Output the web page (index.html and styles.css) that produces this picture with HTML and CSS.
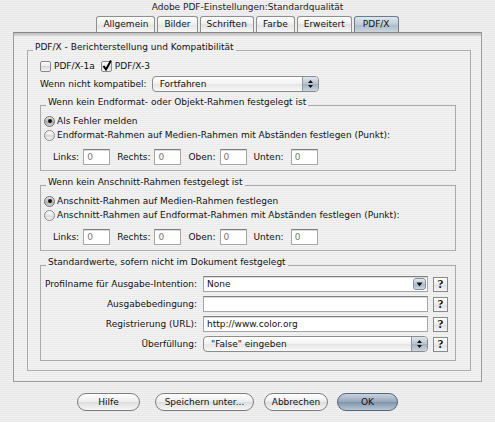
FILE: index.html
```html
<!DOCTYPE html>
<html lang="de">
<head>
  <meta charset="UTF-8">
  <title>Adobe PDF-Einstellungen</title>
  <link rel="stylesheet" href="styles.css">
</head>
<body>
  <div class="title">Adobe PDF-Einstellungen:Standardqualität</div>

  <div class="tabs">
    <span class="tab">Allgemein</span>
    <span class="tab">Bilder</span>
    <span class="tab">Schriften</span>
    <span class="tab">Farbe</span>
    <span class="tab">Erweitert</span>
    <span class="tab active">PDF/X</span>
  </div>

  <div class="panel">
    <fieldset class="group outer">
      <legend>PDF/X - Berichterstellung und Kompatibilität</legend>
      <div class="outer-body">
        <div class="checks">
          <span class="check"><span class="box"></span>PDF/X-1a</span>
          <span class="check"><span class="box"><svg width="12" height="13" viewBox="0 0 12 13"><path d="M2.5 7 L5 10.5 L10 1.5" fill="none" stroke="#000" stroke-width="2"/></svg></span>PDF/X-3</span>
        </div>

        <div class="compat">
          <span>Wenn nicht kompatibel:</span>
          <span class="popup compat-popup">
            <span class="popup-text">Fortfahren</span>
            <span class="cap"><svg width="7" height="10" viewBox="0 0 7 10"><path d="M1 4 L3.5 1 L6 4 Z M1 6 L3.5 9 L6 6 Z" fill="#111"/></svg></span>
          </span>
        </div>

        <fieldset class="group sub">
          <legend>Wenn kein Endformat- oder Objekt-Rahmen festgelegt ist</legend>
          <div class="sub-body">
            <div class="radio"><span class="dot on"></span>Als Fehler melden</div>
            <div class="radio"><span class="dot"></span>Endformat-Rahmen auf Medien-Rahmen mit Abständen festlegen (Punkt):</div>
            <div class="margins">
              <span class="m-label">Links:</span><span class="field small">0</span>
              <span class="m-label">Rechts:</span><span class="field small">0</span>
              <span class="m-label">Oben:</span><span class="field small">0</span>
              <span class="m-label wide">Unten:</span><span class="field small">0</span>
            </div>
          </div>
        </fieldset>

        <fieldset class="group sub">
          <legend>Wenn kein Anschnitt-Rahmen festgelegt ist</legend>
          <div class="sub-body">
            <div class="radio"><span class="dot on"></span>Anschnitt-Rahmen auf Medien-Rahmen festlegen</div>
            <div class="radio"><span class="dot"></span>Anschnitt-Rahmen auf Endformat-Rahmen mit Abständen festlegen (Punkt):</div>
            <div class="margins">
              <span class="m-label">Links:</span><span class="field small">0</span>
              <span class="m-label">Rechts:</span><span class="field small">0</span>
              <span class="m-label">Oben:</span><span class="field small">0</span>
              <span class="m-label wide">Unten:</span><span class="field small">0</span>
            </div>
          </div>
        </fieldset>

        <fieldset class="group sub">
          <legend>Standardwerte, sofern nicht im Dokument festgelegt</legend>
          <div class="form">
            <span class="f-label">Profilname für Ausgabe-Intention:</span>
            <span class="field combo">None<span class="combo-btn"><svg width="7" height="5" viewBox="0 0 7 5"><path d="M0.5 0.5 L6.5 0.5 L3.5 4.5 Z" fill="#111"/></svg></span></span>
            <span class="help">?</span>

            <span class="f-label">Ausgabebedingung:</span>
            <span class="field"></span>
            <span class="help">?</span>

            <span class="f-label">Registrierung (URL):</span>
            <span class="field">http://www.color.org</span>
            <span class="help">?</span>

            <span class="f-label">Überfüllung:</span>
            <span class="popup">
              <span class="popup-text">"False" eingeben</span>
              <span class="cap"><svg width="7" height="10" viewBox="0 0 7 10"><path d="M1 4 L3.5 1 L6 4 Z M1 6 L3.5 9 L6 6 Z" fill="#111"/></svg></span>
            </span>
            <span class="help">?</span>
          </div>
        </fieldset>
      </div>
    </fieldset>
  </div>

  <div class="buttons">
    <span class="btn hilfe">Hilfe</span>
    <span class="btn speichern">Speichern unter...</span>
    <span class="btn abbrechen">Abbrechen</span>
    <span class="btn ok">OK</span>
  </div>
</body>
</html>
```

FILE: styles.css
```css
html, body {
  margin: 0;
  padding: 0;
  height: 100%;
  overflow: hidden;
}

body {
  background: repeating-linear-gradient(#f1f1f1 0 1px, #e7e7e7 1px 2px);
  font-family: "DejaVu Sans", sans-serif;
  font-size: 9px;
  color: #111;
}

.title {
  height: 16px;
  line-height: 14px;
  text-align: center;
  color: #222;
}

/* tabs */
.tabs {
  display: flex;
  justify-content: center;
  gap: 2px;
  height: 16px;
}

.tab {
  height: 16px;
  box-sizing: border-box;
  padding: 0 6px;
  line-height: 15px;
  border: 1px solid #8f8f8f;
  border-bottom: none;
  border-radius: 3px 3px 0 0;
  background: linear-gradient(#fdfdfd, #eeeeee 50%, #e2e2e2 50%, #f6f6f6);
}

.tab.active {
  padding: 0 8px;
  background: linear-gradient(#e0e7ee, #bfcbd7 50%, #a9b8c7 50%, #cbd5df);
  border-color: #6d7c8b;
}

/* main panel */
.panel {
  margin: 0 13px;
  height: 350px;
  box-sizing: border-box;
  border: 1px solid #9c9c9c;
  border-top-color: #8a8a8a;
  padding-top: 3px;
  background:
    linear-gradient(#bcbcbc, #dcdcdc) top / 100% 3px no-repeat,
    repeating-linear-gradient(#f3f3f3 0 1px, #eaeaea 1px 2px);
}

.group {
  margin: 0;
  padding: 0;
  border: 1px solid #ababab;
  min-inline-size: 0;
}

.group legend {
  margin-left: 5px;
  padding: 0 2px 6px;
  line-height: 12px;
}

.outer {
  margin: 5px 10px 0 13px;
}

.outer-body {
  padding: 0 14px 9px 12px;
}

.checks {
  display: flex;
  align-items: center;
  height: 14px;
}

.check {
  display: flex;
  align-items: center;
  margin-right: 6px;
}

.box {
  position: relative;
  width: 11px;
  height: 11px;
  box-sizing: border-box;
  margin-right: 3px;
  border: 1px solid #8a8a8a;
  border-radius: 2px;
  background: linear-gradient(#ffffff, #e6e6e6 50%, #d9d9d9 50%, #f4f4f4);
}

.box svg {
  position: absolute;
  left: -1px;
  top: -3px;
}

.compat {
  display: flex;
  align-items: center;
  gap: 5px;
  margin-top: 3px;
  height: 16px;
}

/* popup buttons */
.popup {
  display: flex;
  align-items: center;
  height: 16px;
  box-sizing: border-box;
  border: 1px solid #8c8c8c;
  border-radius: 4px;
  background: linear-gradient(#ffffff, #f1f1f1 50%, #e5e5e5 50%, #f8f8f8);
  overflow: hidden;
}

.compat-popup {
  width: 167px;
}

.popup-text {
  flex: 1;
  padding-left: 7px;
}

.cap {
  width: 15px;
  height: 100%;
  display: flex;
  align-items: center;
  justify-content: center;
  border-left: 1px solid #8c97a4;
  background: linear-gradient(#dfe5ec, #b7c3cf 50%, #a2b0bf 50%, #cdd6df);
}

/* sub groups */
.sub {
  margin-top: 4px;
}

.sub + .sub {
  margin-top: 5px;
}

.sub-body {
  padding: 0 0 5px 3px;
}

.radio {
  display: flex;
  align-items: center;
  height: 14px;
}

.dot {
  width: 11px;
  height: 11px;
  box-sizing: border-box;
  margin-right: 2px;
  border: 1px solid #8a8a8a;
  border-radius: 50%;
  background: linear-gradient(#ffffff, #e4e4e4 50%, #d6d6d6 50%, #f4f4f4);
  display: flex;
  align-items: center;
  justify-content: center;
}

.dot.on {
  border-color: #6f6f6f;
  background: linear-gradient(#e6e6e6, #bdbdbd 50%, #a9a9a9 50%, #d8d8d8);
}

.dot.on::after {
  content: "";
  width: 4px;
  height: 4px;
  border-radius: 50%;
  background: #111;
}

.margins {
  display: flex;
  align-items: center;
  height: 16px;
  margin-top: 7px;
  padding-left: 9px;
}

.m-label {
  margin-right: 4px;
}

.m-label.wide {
  margin-right: 7px;
}

.field {
  height: 16px;
  box-sizing: border-box;
  padding-left: 3px;
  line-height: 14px;
  background: #fff;
  border: 1px solid #a6a6a6;
  border-top-color: #808080;
  box-shadow: inset 0 1px 0 #dadada;
}

.field.small {
  width: 27px;
  margin-right: 7px;
  color: #777;
}

/* defaults form */
.form {
  display: grid;
  grid-template-columns: 1fr 225px 15px;
  column-gap: 5px;
  row-gap: 4px;
  grid-auto-rows: 16px;
  align-items: center;
  padding: 2px 7px 8px 0;
}

.f-label {
  text-align: right;
  padding-right: 1px;
}

.combo {
  display: flex;
  align-items: center;
  justify-content: space-between;
  padding-right: 1px;
}

.combo-btn {
  width: 13px;
  height: 12px;
  display: flex;
  align-items: center;
  justify-content: center;
  border: 1px solid #8593a2;
  border-radius: 3px;
  box-sizing: border-box;
  background: linear-gradient(#e3e8ee, #bac6d2 50%, #a5b3c2 50%, #d0d8e1);
}

.help {
  width: 15px;
  height: 15px;
  box-sizing: border-box;
  border: 1px solid #8a8a8a;
  background: linear-gradient(#ffffff, #ececec 50%, #e0e0e0 50%, #f6f6f6);
  font-family: "Liberation Serif", serif;
  font-weight: bold;
  font-size: 12px;
  line-height: 13px;
  text-align: center;
}

/* bottom buttons */
.buttons {
  display: flex;
  margin-top: 11px;
  padding-left: 77px;
}

.btn {
  height: 18px;
  box-sizing: border-box;
  line-height: 16px;
  text-align: center;
  border: 1px solid #7d7d7d;
  border-radius: 9px;
  background: linear-gradient(#ffffff, #ececec 50%, #dcdcdc 50%, #f7f7f7);
}

.hilfe { width: 63px; margin-right: 15px; }
.speichern { width: 99px; margin-right: 10px; }
.abbrechen { width: 64px; margin-right: 9px; }

.ok {
  width: 61px;
  border-color: #55657a;
  background: linear-gradient(#c9d3de, #95a6b8 50%, #7e92a8 50%, #b9c7d5);
}
```
